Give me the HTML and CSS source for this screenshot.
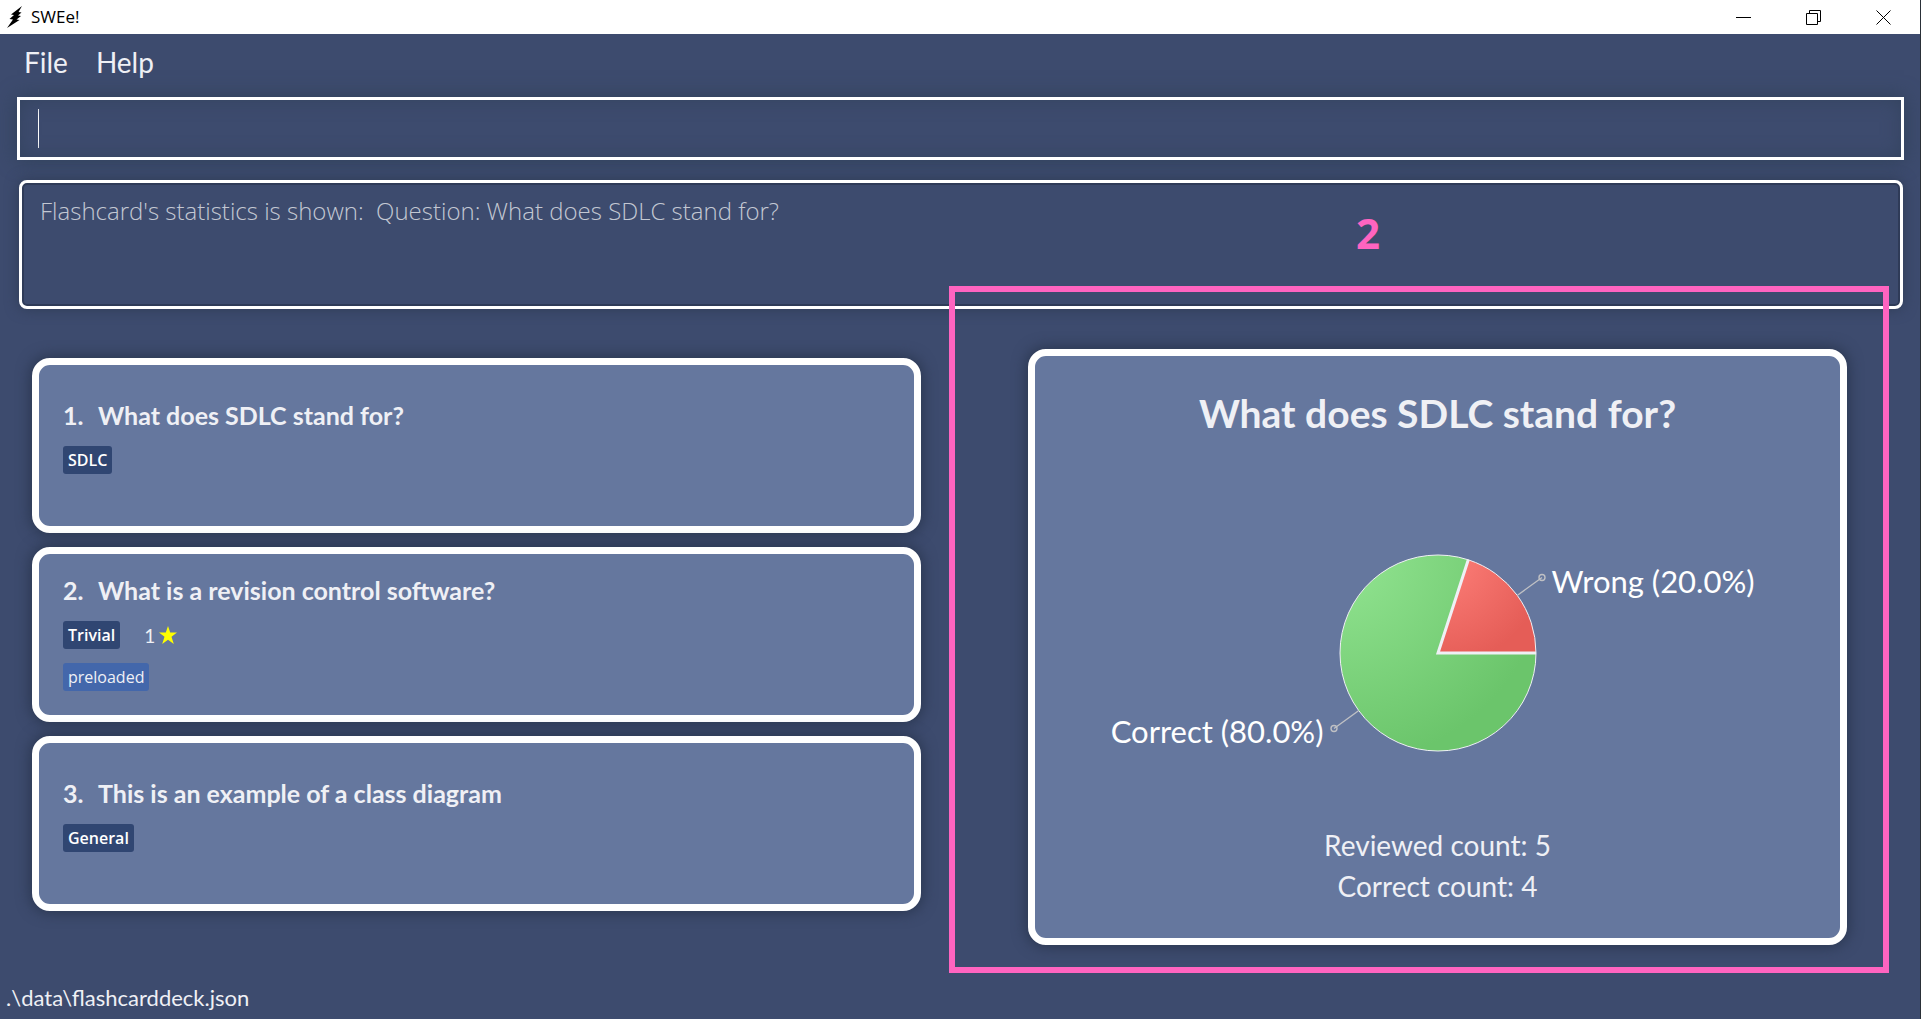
FILE: index.html
```html
<!DOCTYPE html>
<html lang="en">
<head>
<meta charset="utf-8">
<title>SWEe!</title>
<link rel="stylesheet" href="styles.css">
</head>
<body>
<header class="titlebar">
  <svg class="app-icon" width="16" height="22" viewBox="0 0 16 22" aria-hidden="true"><path d="M15 0 4 8.500l3 .5-4.500 4 3.500.5L0 22l12.500-8-3-.5 4.500-3.500-3-.5 3.500-3-3-.5z" fill="#000"/></svg>
  <span class="app-name">SWEe!</span>
  <div class="window-controls">
    <button class="window-button" type="button" aria-label="Minimize"><svg width="15" height="15" viewBox="0 0 15 15"><path d="M0 7.500h15"/></svg></button>
    <button class="window-button" type="button" aria-label="Restore"><svg width="15" height="15" viewBox="0 0 15 15"><path d="M.5 3.500h11v11H.5zM3.500 3.500v-3h11v11h-3"/></svg></button>
    <button class="window-button" type="button" aria-label="Close"><svg width="15" height="15" viewBox="0 0 15 15"><path d="m.5.5 14 14m0-14-14 14"/></svg></button>
  </div>
</header>

<nav class="menubar">
  <button class="menu" type="button">File</button>
  <button class="menu" type="button">Help</button>
</nav>

<input class="command-box" type="text" aria-label="Command" autofocus>

<output class="result-box">Flashcard's statistics is shown:&nbsp; Question: What does SDLC stand for?</output>

<main class="content">
  <section class="deck" aria-label="Flashcards">
    <article class="card">
      <h2 class="card-title"><span class="card-index">1.</span>What does SDLC stand for?</h2>
      <div class="card-row"><span class="tag tag-category">SDLC</span></div>
      <div class="card-row"></div>
    </article>
    <article class="card card-tagged">
      <h2 class="card-title"><span class="card-index">2.</span>What is a revision control software?</h2>
      <div class="card-row">
        <span class="tag tag-category">Trivial</span>
        <span class="priority">1<svg width="18" height="18" viewBox="0 0 18 18" aria-label="star"><path d="m9 0 2.200 6.600H18l-5.500 4.200L14.800 18 9 13.700 3.200 18l2.300-7.200L0 6.600h6.800z" fill="#ff0"/></svg></span>
      </div>
      <div class="card-row"><span class="tag tag-label">preloaded</span></div>
    </article>
    <article class="card">
      <h2 class="card-title"><span class="card-index">3.</span>This is an example of a class diagram</h2>
      <div class="card-row"><span class="tag tag-category">General</span></div>
      <div class="card-row"></div>
    </article>
  </section>

  <section class="stats-pane" aria-label="Statistics">
    <div class="stats">
      <h1 class="stats-title">What does SDLC stand for?</h1>
      <div class="chart">
        <span class="chart-label chart-label-correct">Correct (80.0%)</span>
        <svg class="pie" width="222" height="200" viewBox="-111 -100 222 200" aria-hidden="true">
          <defs>
            <radialGradient id="correct" gradientUnits="userSpaceOnUse" cx="-98" cy="-98" r="210">
              <stop offset="0" stop-color="#93e592"/><stop offset="1" stop-color="#6bc56b"/>
            </radialGradient>
            <radialGradient id="wrong" gradientUnits="userSpaceOnUse" cx="0" cy="-98" r="110">
              <stop offset="0" stop-color="#ff817b"/><stop offset="1" stop-color="#e55d57"/>
            </radialGradient>
          </defs>
          <path d="M0 0H98A98 98 0 1 1 30.300-93.200Z" fill="url(#correct)" stroke="#eff0f5"/>
          <path d="M0 0 30.300-93.200A98 98 0 0 1 98 0Z" fill="url(#wrong)" stroke="#eff0f5"/>
          <path d="M30.300-93.200 0 0H98" fill="none" stroke="#eff0f5" stroke-width="3"/>
          <g fill="none" stroke="#bfc0c4" stroke-width="1.400">
            <path d="m79.500-57.800 24.500-17.700M-79.500 57.800-104 75.500"/>
            <circle cx="104" cy="-75.500" r="3"/><circle cx="-104" cy="75.500" r="3"/>
          </g>
        </svg>
        <span class="chart-label chart-label-wrong">Wrong (20.0%)</span>
      </div>
      <p class="count">Reviewed count: 5</p>
      <p class="count">Correct count: 4</p>
    </div>
    <div class="callout"><span class="callout-number">2</span></div>
  </section>
</main>

<footer class="statusbar">.\data\flashcarddeck.json</footer>
</body>
</html>
```
FILE: styles.css
```css
* {
  box-sizing: border-box;
}

body {
  margin: 0;
  min-height: 100vh;
  display: flex;
  flex-direction: column;
  background: #3d4b6e;
  border-right: 1px solid #2a3038;
  color: #eff0f5;
  font-family: "Lato", sans-serif;
}

button {
  border: 0;
  padding: 0;
  background: none;
  color: inherit;
  font: inherit;
}

.titlebar {
  display: flex;
  align-items: center;
  height: 34px;
  padding: 0 2px 0 7px;
  background: #fff;
  color: #000;
}

.app-name {
  margin-left: 8px;
  font: 17px/24px "Open Sans", sans-serif;
}

.window-controls {
  display: flex;
  margin-left: auto;
}

.window-button {
  display: flex;
  align-items: center;
  justify-content: center;
  width: 70px;
  height: 32px;
}

.window-button path {
  fill: none;
  stroke: #000;
}

.menubar {
  display: flex;
  gap: 28px;
  height: 63px;
  padding: 10px 24px;
  font-size: 28px;
  line-height: 36px;
}

.menu {
  height: 36px;
}

.command-box {
  height: 63px;
  margin: 0 16px 20px 17px;
  padding: 0 18px;
  border: 3px solid #fff;
  border-radius: 0;
  outline: 0;
  background: linear-gradient(#fff, #fff) 18px 50% / 1px 39px no-repeat;
  color: #fff;
  caret-color: transparent;
  font: 300 24px/36px "Open Sans", sans-serif;
  box-shadow: 0 0 18px #2f4058, inset 0 0 18px #34445f;
}

.result-box {
  min-height: 129px;
  margin: 0 17px 0 19px;
  padding: 11px 18px;
  border: 3px solid #fff;
  border-radius: 8px;
  color: #c3c8d3;
  font: 300 24px/34px "Open Sans", sans-serif;
  box-shadow: 0 0 14px #2f3c56, inset 0 0 0 2px #2f3b58;
}

.content {
  flex: 1;
  display: grid;
  grid-template-columns: 1fr 1fr;
  padding: 40px 0 38px;
}

.deck {
  display: flex;
  flex-direction: column;
  gap: 14px;
  padding: 9px 39px 0 32px;
}

.card,
.stats {
  border: 7px solid #fff;
  background: #65779e;
  box-shadow: 0 0 14px 2px #2b3750;
}

.card {
  height: 175px;
  padding: 33px 24px 0;
  border-radius: 18px;
}

.card-tagged {
  padding-top: 19px;
}

.card-title {
  margin: 0 0 14px;
  font-size: 25px;
  font-weight: 700;
  line-height: 34px;
}

.card-index {
  display: inline-block;
  width: 35px;
}

.card-row {
  display: flex;
  align-items: center;
  gap: 24px;
  height: 28px;
  margin-bottom: 14px;
}

.tag {
  padding: 0 5px;
  border-radius: 3px;
  font: 16px/28px "Open Sans", sans-serif;
}

.tag-category {
  background: #304672;
  color: #fff;
  font-weight: 600;
}

.tag-label {
  background: #4367ab;
}

.priority {
  display: flex;
  align-items: center;
  gap: 4px;
  font-size: 19px;
}

.stats-pane {
  position: relative;
  display: flex;
  padding: 0 73px 0 68px;
}

.stats {
  flex: 1;
  display: flex;
  flex-direction: column;
  align-items: center;
  padding: 33px 0 31px;
  border-radius: 18px;
}

.stats-title {
  margin: 0;
  font-size: 39px;
  font-weight: 700;
  line-height: 48px;
}

.chart {
  flex: 1;
  display: grid;
  grid-template-columns: 1fr 222px 1fr;
  align-items: center;
  align-self: stretch;
  gap: 3px;
  padding-top: 43px;
}

.chart-label {
  color: #fff;
  font-size: 31px;
  line-height: 36px;
}

.chart-label-correct {
  padding-top: 156px;
  text-align: right;
}

.chart-label-wrong {
  padding-bottom: 144px;
}

.count {
  margin: 0;
  font-size: 28px;
  line-height: 41px;
}

.callout {
  position: absolute;
  top: -63px;
  right: 31px;
  bottom: -28px;
  left: -11px;
  border: 6px solid #ff64c0;
  pointer-events: none;
}

.callout-number {
  position: absolute;
  top: -89px;
  left: 401px;
  color: #ff64c0;
  font: 700 42px/60px "Open Sans", sans-serif;
}

.statusbar {
  padding: 0 6px 6px;
  font-size: 22px;
  line-height: 30px;
}
```
